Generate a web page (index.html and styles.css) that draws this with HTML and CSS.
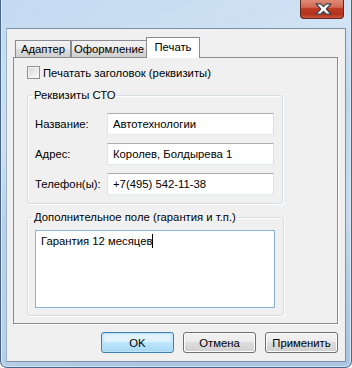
FILE: index.html
```html
<!DOCTYPE html>
<html>
<head>
    <title>Настройки печати</title>
    <link rel="stylesheet" href="styles.css">
</head>
<body>
    <div class="window">
        <div class="titlebar">
            <div class="close-btn" title="Закрыть">
                <svg width="17" height="12" viewBox="0 0 17 12">
                    <polygon points="1,0.8 5.6,0.8 8.5,3.6 11.4,0.8 16,0.8 11.3,6 16,11.2 11.4,11.2 8.5,8.4 5.6,11.2 1,11.2 5.7,6" fill="#fff" stroke="#3a3f4a" stroke-width="1.2" stroke-linejoin="round"/>
                </svg>
            </div>
        </div>

        <div class="client">
            <div class="tabs">
                <div class="tab">Адаптер</div>
                <div class="tab">Оформление</div>
                <div class="tab active">Печать</div>
            </div>

            <div class="tab-panel">
                <label class="check-row">
                    <span class="checkbox"></span>
                    <span>Печатать заголовок (реквизиты)</span>
                </label>

                <!-- реквизиты -->
                <fieldset class="group">
                    <legend>Реквизиты СТО</legend>
                    <div class="field-row">
                        <span class="field-label">Название:</span>
                        <div class="textbox">Автотехнологии</div>
                    </div>
                    <div class="field-row">
                        <span class="field-label">Адрес:</span>
                        <div class="textbox">Королев, Болдырева 1</div>
                    </div>
                    <div class="field-row last">
                        <span class="field-label">Телефон(ы):</span>
                        <div class="textbox">+7(495) 542-11-38</div>
                    </div>
                </fieldset>

                <fieldset class="group extra">
                    <legend>Дополнительное поле (гарантия и т.п.)</legend>
                    <div class="memo">Гарантия 12 месяцев<span class="caret"></span></div>
                </fieldset>
            </div>

            <div class="buttons">
                <button class="btn default">OK</button>
                <button class="btn">Отмена</button>
                <button class="btn">Применить</button>
            </div>
        </div>
    </div>
</body>
</html>
```

FILE: styles.css
```css
html, body {
    margin: 0;
    padding: 0;
}
body {
    width: 352px;
    height: 368px;
    overflow: hidden;
    font-family: "Liberation Sans", Arial, sans-serif;
    font-size: 11.3px;
    color: #000;
}
.window {
    width: 352px;
    height: 368px;
    box-sizing: border-box;
    display: flex;
    flex-direction: column;
    padding: 0 5px 5px 5px;
    border: 1px solid #48668a;
    border-top: none;
    border-radius: 0 0 7px 7px;
    background:
        linear-gradient(160deg, rgba(255,255,255,0) 0, rgba(255,255,255,0.25) 30%, rgba(255,255,255,0) 45%, rgba(255,255,255,0.2) 70%, rgba(255,255,255,0) 85%),
        linear-gradient(to bottom, #c3daf1 0, #bcd4ec 50%, #a9c5e2 100%);
    box-shadow: inset 1px 0 0 #dbe8f5, inset -1px 0 0 #dbe8f5, inset 0 -1px 0 #d0e0f0;
}
.titlebar {
    height: 28px;
    flex: none;
    display: flex;
    justify-content: flex-end;
    align-items: flex-start;
}
.close-btn {
    width: 44px;
    height: 19px;
    margin-right: 2px;
    box-sizing: border-box;
    border: 1px solid #5e2a22;
    border-top: none;
    border-radius: 0 0 4px 4px;
    background-color: #c4402a;
    background-image: linear-gradient(to bottom, #e08a76 0, #d26a53 40%, #bf3a22 48%, #b5331b 80%, #cc553c 100%);
    display: flex;
    align-items: center;
    justify-content: center;
}
.close-btn svg {
    display: block;
    margin-left: 3px;
}
.client {
    flex: 1;
    display: flex;
    flex-direction: column;
    background-color: #f0f0f0;
    border: 1px solid #7d8fa2;
    border-left-color: #9fb3c8;
    padding: 8px 7px 8px 6px;
}
.tabs {
    display: flex;
    align-items: flex-end;
    height: 20px;
    padding-left: 2px;
    position: relative;
    z-index: 1;
}
.tab {
    height: 16px;
    line-height: 17px;
    box-sizing: content-box;
    border: 1px solid #898c95;
    border-bottom: none;
    background: linear-gradient(to bottom, #f2f2f2 0, #ebebeb 50%, #dddddd 50%, #cfcfcf 100%);
    text-align: center;
    padding: 0;
    white-space: nowrap;
}
.tab:nth-child(1) {
    width: 54px;
}
.tab:nth-child(2) {
    width: 74px;
}
.tab.active {
    height: 20px;
    line-height: 19px;
    width: 52px;
    margin-left: -1px;
    margin-bottom: -1px;
    background: #fff;
}
.tab-panel {
    flex: 1;
    border: 1px solid #898c95;
    background-color: #f0f0f0;
    box-shadow: 1px 1px 0 #fff;
    padding: 8px 13px 7px 13px;
}
.check-row {
    display: flex;
    align-items: center;
    height: 13px;
    gap: 3px;
}
.checkbox {
    width: 11px;
    height: 11px;
    border: 1px solid #8e8f8f;
    background: linear-gradient(135deg, #d4d4d4 0, #e8e8e8 50%, #fafafa 100%);
    box-shadow: inset 0 0 0 1px #f4f4f4;
}
.group {
    width: 256px;
    box-sizing: border-box;
    margin: 9px 0 0 0;
    padding: 11px 8px 8px 7px;
    border: 1px solid #d5dfe5;
    border-radius: 3px;
    box-shadow: inset 1px 1px 0 #fff, 1px 1px 0 #fff;
}
.group legend {
    padding: 0 2px;
    margin-left: -3px;
    line-height: 14px;
}
.group.extra {
    margin-top: 6px;
    padding-top: 6px;
    padding-bottom: 7px;
}
.field-row {
    display: flex;
    align-items: center;
    margin-bottom: 8px;
}
.field-row.last {
    margin-bottom: 0;
}
.field-label {
    width: 72px;
}
.textbox {
    width: 167px;
    height: 22px;
    box-sizing: border-box;
    background-color: #fff;
    border: 1px solid;
    border-color: #abadb3 #dbdfe6 #e3e9ef #e2e3ea;
    padding: 0 5px;
    line-height: 20px;
    white-space: nowrap;
}
.memo {
    width: 240px;
    height: 78px;
    box-sizing: border-box;
    background-color: #fff;
    border: 1px solid #8db2d8;
    padding: 3px 5px;
    line-height: 14px;
}
.caret {
    display: inline-block;
    width: 1px;
    height: 14px;
    background-color: #000;
    vertical-align: top;
}
.buttons {
    display: flex;
    justify-content: flex-end;
    gap: 9px;
    margin-top: 8px;
}
.btn {
    width: 73px;
    height: 21px;
    box-sizing: border-box;
    font-family: inherit;
    font-size: 11.3px;
    color: #000;
    padding: 0;
    border: 1px solid #707070;
    border-radius: 3px;
    background: linear-gradient(to bottom, #f2f2f2 0, #ebebeb 50%, #dddddd 50%, #cfcfcf 100%);
    box-shadow: inset 0 0 0 1px #fcfcfc;
}
.btn.default {
    border-color: #3c7fb1;
    background: linear-gradient(to bottom, #eaf6fd 0, #d9f0fc 50%, #bee6fd 50%, #a7d9f5 100%);
    box-shadow: inset 0 0 0 1px #c2e4f6, inset 0 0 2px 1px #9ed6f3;
}
```
